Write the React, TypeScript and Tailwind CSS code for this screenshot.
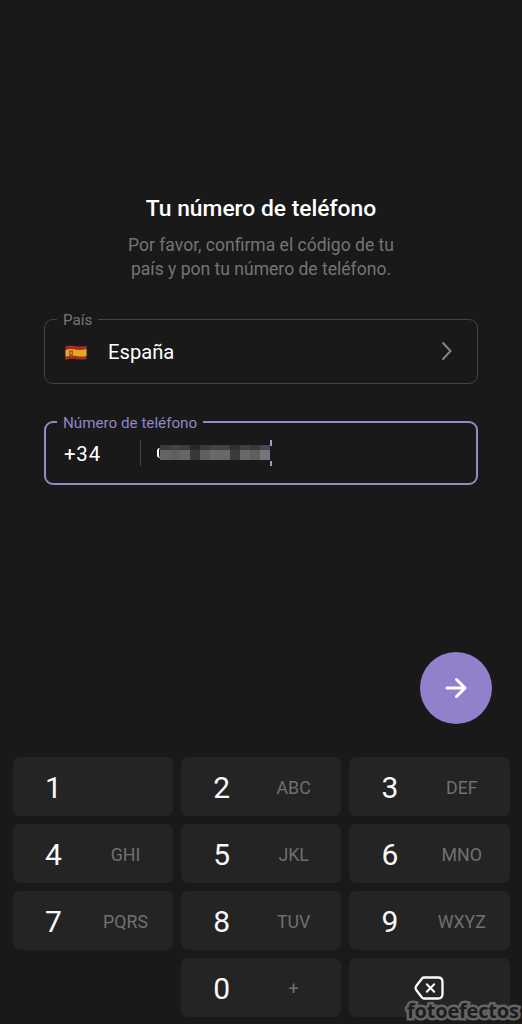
import type { ReactNode } from "react";

const keys: [string, string][] = [
  ["1", ""],
  ["2", "ABC"],
  ["3", "DEF"],
  ["4", "GHI"],
  ["5", "JKL"],
  ["6", "MNO"],
  ["7", "PQRS"],
  ["8", "TUV"],
  ["9", "WXYZ"],
];

const maskTop = ["#3b3b3b", "#414141", "#3d3d3d", "#292929", "#3b3b3b", "#424242", "#434343", "#303030", "#414141", "#393939", "#4a484f"];
const maskBottom = ["#646464", "#5f5f5f", "#666666", "#383838", "#606060", "#696969", "#686868", "#3b3b3b", "#696969", "#5e5e5e", "#77747f"];

function Key({ digit, letters }: { digit: string; letters: string }) {
  return (
    <button className="flex h-[59px] items-center rounded-[7px] bg-[#242424]">
      <span className="w-[81px] pt-[1px] text-center text-[30px] leading-[35px] text-[#f8f8f8]">{digit}</span>
      <span className="w-[63px] pt-[2px] text-center text-[17.8px] leading-[22px] text-[#707070]">{letters}</span>
    </button>
  );
}

function MaskedRow({ colors, height }: { colors: string[]; height: string }) {
  return (
    <div className={`flex ${height}`}>
      {colors.map((color, i) => (
        <span key={i} className="w-[10px]" style={{ backgroundColor: color }} />
      ))}
    </div>
  );
}

function Field({ label, active, children }: { label: string; active?: boolean; children: ReactNode }) {
  return (
    <fieldset
      className={
        active
          ? "h-[73px] rounded-[9px] border-2 border-[#9589c4] pl-[11px] text-[#9384c8]"
          : "h-[75px] rounded-[9px] border border-[#444444] pl-[12px] text-[#777777]"
      }
    >
      <legend className="h-[20px] px-[6px] text-[15.2px] leading-[22px]">{label}</legend>
      {children}
    </fieldset>
  );
}

export default function App() {
  return (
    <main className="relative flex h-[1024px] w-[522px] flex-col overflow-hidden bg-[#191919] font-[Roboto,sans-serif]">
      <header className="pt-[194px] text-center">
        <h1 className="text-[22.8px] leading-[30px] font-medium text-white">Tu número de teléfono</h1>
        <p className="mt-[9px] text-[17.55px] leading-[24px] text-[#747474]">
          Por favor, confirma el código de tu
          <br />
          país y pon tu número de teléfono.
        </p>
      </header>

      <section className="mt-[28px] flex h-[176px] flex-col justify-between px-[44px]">
        <Field label="País">
          <div className="flex h-[44px] items-center pl-[7px]">
            <svg className="mt-[3px] h-[18px] w-[24px]" viewBox="0 0 24 18">
              <path d="M1.5 2.5Q6 1 11 2T22.5 1.8V15Q18 16 12.5 15T1.5 16Z" fill="#a82c20" />
              <path d="M1.5 6Q6 4.5 11 5.5T22.5 5.2V12Q18 13 12.5 12T1.5 12.8Z" fill="#e0a823" />
              <path d="M5 6.5h4v5Q7 13 5 11.5Z" fill="#a6571d" />
              <path d="M6 8h2v2H6z" fill="#c98440" />
            </svg>
            <span className="ml-[20px] pt-[2px] text-[20.2px] leading-[24px] text-white">España</span>
            <svg className="mr-[23px] ml-auto h-[20px] w-[14px]" viewBox="0 0 14 20" fill="none" stroke="#858585" strokeWidth="2" strokeLinecap="round">
              <path d="M3 2 10.5 10 3 18" />
            </svg>
          </div>
        </Field>

        <Field label="Número de teléfono" active>
          <div className="flex h-[42px] items-center pl-[7px] text-white">
            <span className="w-[76px] pt-[2px] text-[20.4px] leading-[24px] tracking-[0.8px]">+34</span>
            <span className="h-[26px] w-px bg-[#454545]" />
            <span className="ml-[16px] h-[10px] w-[3px] rounded-l-full border-l-2 border-white" />
            <div className="-mt-[1px]">
              <MaskedRow colors={maskTop} height="h-[5px]" />
              <MaskedRow colors={maskBottom} height="h-[10px]" />
            </div>
            <div className="flex h-[26px] w-[2px] flex-col justify-between">
              <span className="h-[6px] bg-[#a49ac8]" />
              <span className="h-[5px] bg-[#a49ac8]" />
            </div>
          </div>
        </Field>
      </section>

      <div className="mt-[167px] flex justify-end pr-[30px]">
        <button className="flex h-[72px] w-[72px] items-center justify-center rounded-full bg-[#9180cc]">
          <svg className="h-[24px] w-[24px]" viewBox="0 0 24 24" fill="none" stroke="white" strokeWidth="3" strokeLinecap="round" strokeLinejoin="round">
            <path d="M3 12H21M12.5 3.5 21 12 12.5 20.5" />
          </svg>
        </button>
      </div>

      <section className="mt-[33px] grid grid-cols-3 gap-x-[8px] gap-y-[8.1px] pr-[12.5px] pl-[13px]">
        {keys.map(([digit, letters]) => (
          <Key key={digit} digit={digit} letters={letters} />
        ))}
        <div />
        <Key digit="0" letters="+" />
        <button className="flex h-[59px] items-center justify-center rounded-[7px] bg-[#242424]">
          <svg className="h-[24px] w-[30px]" viewBox="0 0 30 24" fill="none" stroke="#fafafa" strokeWidth="2.3" strokeLinecap="round" strokeLinejoin="round">
            <path d="M10 1.5H24Q28.5 1.5 28.5 6V18Q28.5 22.5 24 22.5H10Q8.8 22.5 8 21.5L2.2 14Q1 12 2.2 10L8 2.5Q8.8 1.5 10 1.5Z" />
            <path d="M12.8 8.2 20.2 15.8M20.2 8.2 12.8 15.8" strokeWidth="2" />
          </svg>
        </button>
      </section>

      <span className="absolute top-[997px] left-[407px] text-[20px] leading-[28px] font-bold tracking-[-0.2px] text-[#1d1d1d] [-webkit-text-stroke:5px_#646464] [font-family:'Open_Sans',sans-serif] [paint-order:stroke_fill]">
        fotoefectos
      </span>
    </main>
  );
}
